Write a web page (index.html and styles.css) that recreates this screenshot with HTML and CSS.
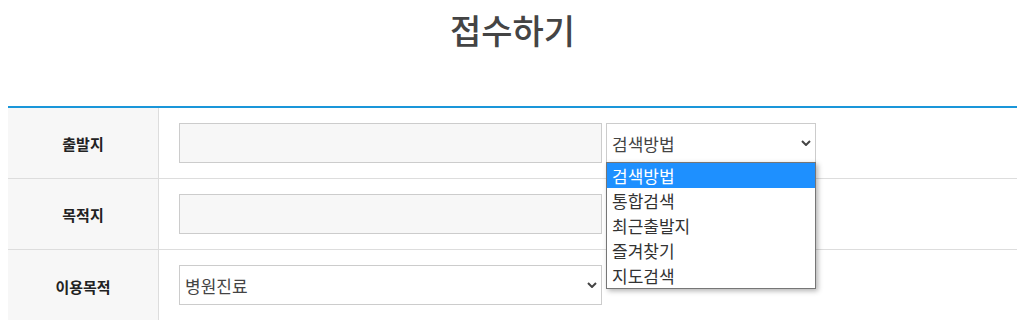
FILE: index.html
```html
<!DOCTYPE html>
<html lang="ko">
<head>
<meta charset="utf-8">
<title>접수하기</title>
<link rel="stylesheet" href="styles.css">
</head>
<body>
<div class="page">
  <h1 class="title">접수하기</h1>
  <div class="form">
    <div class="row">
      <div class="label">출발지</div>
      <div class="field">
        <div class="input wide"></div>
        <div class="select small">
          <span class="select-text">검색방법</span>
          <svg class="chev" width="10" height="6" viewBox="0 0 10 6"><path d="M1 1l4 4 4-4" fill="none" stroke="#444" stroke-width="2"/></svg>
          <ul class="dropdown">
            <li class="opt active">검색방법</li>
            <li class="opt">통합검색</li>
            <li class="opt">최근출발지</li>
            <li class="opt">즐겨찾기</li>
            <li class="opt">지도검색</li>
          </ul>
        </div>
      </div>
    </div>
    <div class="row">
      <div class="label">목적지</div>
      <div class="field">
        <div class="input wide"></div>
      </div>
    </div>
    <div class="row last">
      <div class="label">이용목적</div>
      <div class="field">
        <div class="select wide white">
          <span class="select-text">병원진료</span>
          <svg class="chev" width="10" height="6" viewBox="0 0 10 6"><path d="M1 1l4 4 4-4" fill="none" stroke="#444" stroke-width="2"/></svg>
        </div>
      </div>
    </div>
  </div>
</div>
</body>
</html>
```
FILE: styles.css
```css
* { box-sizing: border-box; }
html, body { margin: 0; padding: 0; background: #fff; }
body { font-family: "Noto Sans CJK KR", "Noto Sans", sans-serif; color: #333; }
.page { padding: 0 10px 0 8px; }
.title {
  margin: 8px 0 54px;
  text-align: center;
  font-size: 34px;
  line-height: 44px;
  font-weight: 500;
  color: #444;
}
.form { border-top: 2px solid #1a96d9; }
.row { display: flex; height: 71px; border-bottom: 1px solid #ddd; }
.row.last { border-bottom: none; height: 72px; }
.label {
  width: 151px;
  flex: none;
  background: #f7f7f7;
  border-right: 1px solid #ddd;
  display: flex;
  align-items: center;
  justify-content: center;
  font-size: 15px;
  font-weight: 700;
  color: #222;
}
.field {
  flex: 1;
  display: flex;
  align-items: flex-start;
  gap: 4px;
  padding: 15px 0 0 20px;
}
.input {
  height: 40px;
  background: #f7f7f7;
  border: 1px solid #ccc;
}
.wide { width: 423px; }
.small { width: 210px; }
.select {
  position: relative;
  height: 40px;
  background: #fff;
  border: 1px solid #ccc;
  display: flex;
  align-items: center;
  padding: 0 0 0 5px;
}
.select-text { flex: 1; font-size: 17px; color: #444; }
.chev { margin-right: 4px; }
.dropdown {
  position: absolute;
  left: -1px;
  top: 38px;
  width: 210px;
  margin: 0;
  padding: 0;
  list-style: none;
  background: #fff;
  border: 1px solid #767676;
  box-shadow: 2px 2px 5px rgba(0,0,0,0.3);
  z-index: 5;
}
.opt {
  height: 25px;
  line-height: 25px;
  padding-left: 5px;
  font-size: 17px;
  color: #333;
}
.opt.active { background: #1e90ff; color: #fff; }
```
